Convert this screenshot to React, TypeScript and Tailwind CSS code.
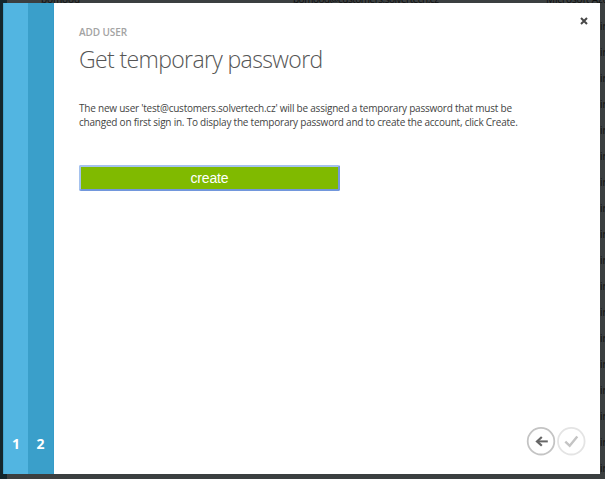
const rows = Array.from({ length: 18 }, (_, i) => i);

function BackgroundTable() {
  return (
    <div className="absolute inset-0 flex bg-[#3b3f40] text-[10px] text-[#101010]">
      <div className="w-[7px] shrink-0 bg-[#14262c]" />
      <div className="min-w-0 flex-1">
        <div className="flex h-[13px] items-start leading-[13px] tracking-[-0.1px]">
          <div className="-mt-[7px] w-[286px] shrink-0 pl-[34px]">bomood</div>
          <div className="-mt-[7px] w-[253px] shrink-0 tracking-[-0.5px]">bomood@customers.solvertech.cz</div>
          <div className="-mt-[7px] whitespace-nowrap">Microsoft Azure Active</div>
        </div>
        {rows.map((row) => (
          <div key={row} className="flex h-[26px] items-center justify-end">
            <span className="w-[5px] whitespace-nowrap">ir</span>
          </div>
        ))}
      </div>
    </div>
  );
}

function BackIcon() {
  return (
    <svg className="h-[30px] w-[30px]" viewBox="0 0 30 30" fill="none">
      <circle cx="15" cy="15.2" r="13.3" stroke="#c4c4c4" strokeWidth="1.8" />
      <path d="M21.8 15.4H11" stroke="#666" strokeWidth="2" />
      <path d="M15.8 11L11 15.4l4.8 4.4" stroke="#666" strokeWidth="2.2" />
    </svg>
  );
}

function DoneIcon() {
  return (
    <svg className="h-[30px] w-[30px]" viewBox="0 0 30 30" fill="none">
      <circle cx="15.3" cy="15.2" r="13.3" stroke="#e4e4e4" strokeWidth="1.8" />
      <path d="M9.3 15.6l4.4 4.2 7.6-9.2" stroke="#c4c4c4" strokeWidth="2.4" />
    </svg>
  );
}

function Steps() {
  return (
    <div className="flex w-[51px] shrink-0 text-[14px] leading-[18px] font-bold text-white">
      <div className="flex w-[25px] items-end justify-center border-l border-[#45a5cf] bg-[#52b5e1] pb-[21px]">1</div>
      <div className="flex w-[26px] items-end justify-center border-r border-[#359bc8] bg-[#3a9fca] pb-[21px]">2</div>
    </div>
  );
}

export default function App() {
  return (
    <div className="relative h-[479px] w-[605px] overflow-hidden font-['Open_Sans','Noto_Sans',sans-serif]">
      <BackgroundTable />
      <div className="relative mt-[3px] ml-[3px] flex h-[471px] w-[597px] bg-white">
        <Steps />
        <div className="flex flex-1 flex-col pl-[25px]">
          <div className="flex justify-between pt-[12px] pr-[12px]">
            <div className="pt-[10px] text-[10px] leading-[14px] font-semibold tracking-[-0.1px] text-[#a3a3a3]">ADD USER</div>
            <button className="flex h-[12px] w-[8px] items-start pt-[2px]" aria-label="Close">
              <svg className="h-[8px] w-[8px]" viewBox="0 0 8 8" stroke="#484848" strokeWidth="2">
                <path d="M1 1l6 6M7 1L1 7" />
              </svg>
            </button>
          </div>
          <h1 className="mt-[3px] text-[23px] leading-[34px] font-light tracking-[-0.63px] whitespace-nowrap text-[#555]">
            Get temporary password
          </h1>
          <p className="mt-[25px] text-[10px] leading-[14px] tracking-[-0.22px] whitespace-nowrap text-[#444]">
            The new user 'test@customers.solvertech.cz' will be assigned a temporary password that must be
            <br />
            changed on first sign in. To display the temporary password and to create the account, click Create.
          </p>
          <button className="mt-[36px] h-[26px] w-[261px] rounded-[2px] border-2 border-[#7297dc] border-t-[#a5c2ee] border-l-[#a5c2ee] bg-[#80ba00] font-['Liberation_Sans',sans-serif] text-[14px] leading-[20px] tracking-[-0.15px] text-white">
            create
          </button>
          <div className="mt-auto mr-[14px] mb-[18px] flex justify-end">
            <BackIcon />
            <DoneIcon />
          </div>
        </div>
      </div>
    </div>
  );
}
